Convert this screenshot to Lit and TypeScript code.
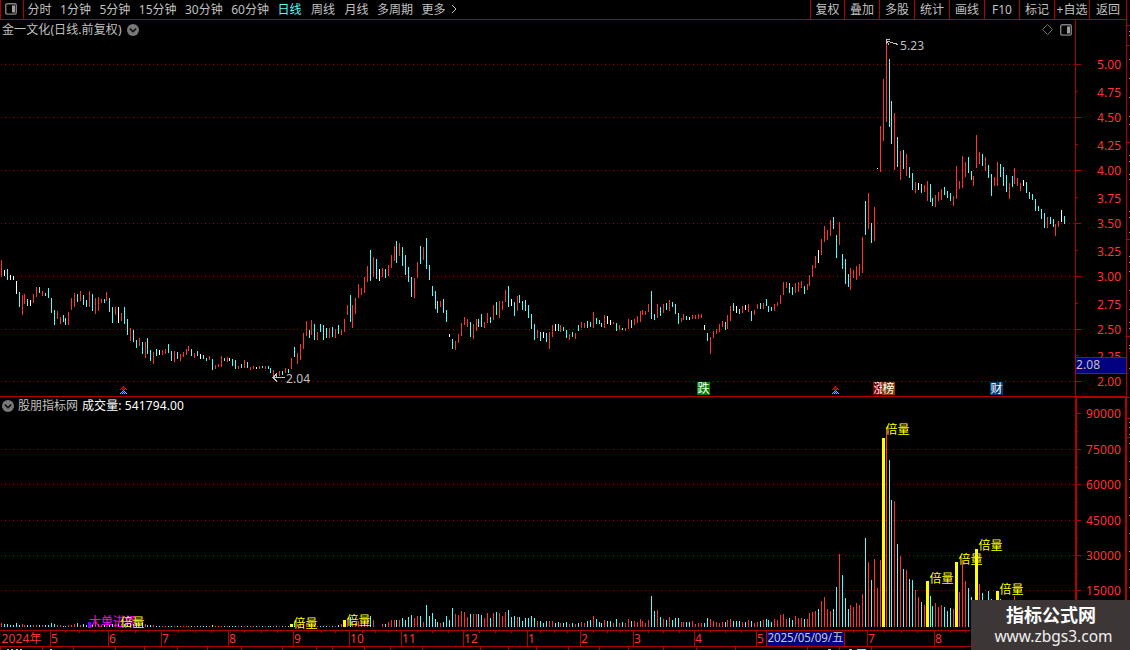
import { LitElement, html, svg, css } from 'lit';
import { customElement, property } from 'lit/decorators.js';

// one token per trading day: colour (r up, c down, w flat), high y, low y
const CANDLES = `
r260-277 w270-276 c269-280 w275-280 w276-280 w281-294 c292-307 r295-315 r294-304 c299-306 w300-306 r294-303 r287-297 c287-293
r291-296 c293-296 c288-298 c298-313 c310-325 r311-319 r317-324 c315-322 c318-325 r312-325 r298-310 r293-307 c294-302 r291-301
c295-305 c300-307 r291-307 c294-311 r298-314 r297-311 r299-303 c299-303 r292-301 c298-312 c307-323 r307-315 w307-323 r313-321
c307-324 c319-335 r328-341 c330-342 c340-348 r338-346 c342-354 r342-358 c338-354 c350-361 r352-364 c349-356 w350-355 r350-355
r349-354 c344-353 c351-361 r351-362 c352-359 r354-361 r352-357 r349-355 r346-351 c349-356 r353-358 c351-356 w354-359 c355-359
c358-361 r356-360 c359-370 r365-369 r364-367 r356-367 c358-361 r357-362 w358-361 c359-366 c360-369 r366-369 c364-368 r360-368
c362-368 r367-370 r366-369 w367-369 r366-369 c366-368 r366-369 c366-369 c368-373 r370-378 c373-377 r371-376 c371-375 r368-373
c369-373 r358-369 c347-357 r353-364 r344-360 r333-349 r321-336 c330-338 r320-335 c324-340 r332-340 c324-332 c325-340 c328-338
r328-338 c327-337 r329-338 c325-334 r330-335 r319-332 r305-315 c295-322 r305-328 r298-314 r284-298 r288-295 r277-293 r266-282
c250-281 r257-277 c259-279 w269-281 r268-277 c269-278 r265-276 r255-268 r246-261 c241-263 r243-256 c247-266 c255-275 c267-282
c277-297 r278-298 r262-278 c246-264 r247-260 c238-269 c265-280 c286-296 c291-309 c301-313 r301-307 c299-313 c310-322 w334-337
c339-349 r341-350 r334-343 r323-336 r317-325 r319-327 c322-337 r324-339 r319-331 c319-327 c314-327 r322-328 r313-323 c317-323
r305-320 c302-315 r301-318 r301-310 r290-302 c286-307 w299-306 c302-316 r296-311 c295-303 c301-310 c300-311 c305-318 c314-329
c324-340 r330-338 c332-341 w332-338 c333-342 r332-349 r325-337 w324-331 c324-331 r325-332 c327-331 c330-338 r334-340 c332-337
r333-339 c325-331 r322-328 r323-328 c321-328 c322-327 r312-328 c318-324 c320-324 c323-327 r315-328 w316-324 w320-325 r322-324
c323-331 r325-330 c328-330 r328-331 r319-329 c320-328 r319-325 r316-323 r311-322 r310-315 r311-315 r304-312 c291-319 c314-320
r304-318 c307-316 r304-313 c303-310 r300-311 c302-307 c304-314 c313-324 r318-322 r314-320 c316-320 w317-320 r315-319 r315-319
r314-319 r314-318 w325-330 c333-341 r337-354 r331-338 r329-334 r324-332 r321-327 c322-330 r315-329 r306-321 c303-311 w306-313
c309-314 r306-313 w305-310 r304-312 c311-321 r310-315 r304-309 c303-309 r303-309 c299-306 c306-312 c307-311 r304-311 r302-306
r295-304 r282-295 r282-288 c283-293 c287-295 r283-293 r282-292 r281-288 c286-294 r284-290 r275-286 r265-277 r256-268 w250-263
r239-255 r226-242 r230-240 r220-236 c217-229 c235-258 r222-245 c254-269 c259-284 c274-287 r268-290 r270-278 r266-280 r264-276
r237-273 c201-235 r193-229 c223-243 r207-241 w168-169 r126-172 r79-141 r43-122 c59-127 c101-144 r113-170 c137-167 r151-180
c150-169 r154-176 c167-178 c173-190 r182-193 w183-190 c184-193 r185-192 r181-201 c184-202 c198-206 r195-207 r192-201 r189-200
c187-195 c191-198 c193-201 r196-206 r166-199 r181-189 r156-188 r162-177 c157-173 c171-180 r176-186 r135-168 r152-164 c154-166
r157-171 c165-178 c174-196 r177-186 r162-186 c164-177 c167-186 c175-192 r183-199 c176-187 r168-184 r178-186 r183-191 w180-186
c182-193 c192-199 c194-200 c199-211 c206-211 c209-219 c213-228 r217-228 c217-224 c219-227 r224-236 r221-227 w210-222 c216-224
`.trim().split(/\s+/);

// x of the n-th day, just under three pixels apart
const dayX = (n: number) => 1 + 3 * n - Math.floor((n + 7.04) / 14.115);

// volume bar heights keyed by the x they start from
const VOLUME_RUNS: [number, string][] = [
  [1, '4 3 3 2 2 4 2 3 2 2 2 2 2 2 2 2 2 4 3 2 2 1 1 2 2 3 4 2 3 2 2 3 5 3 2 2 1 2 3 3 4 3 3 3 4 3 4 3 4 3 2 2 2 1 1 1 1 1 1 1 1 1 1 1 1 1 1 1 1 1 1 1 2 1 1 1 1 1 1 1 1 1 1 1 1 1 1 1 1 1 1 1 1 1 1 1 1 1 1 3 4 3 4 5 4 3 3 2 1 1 1 1 1 1 1 2 3 7 7 10 6 4 6 5 6 8 11 7 6 3'],
  [382, '3 3 5 7 7 7 7 9 7 10 12 9 11 11 5 22 11 14 8 5 4 5 11 7 19 13 12 16 15 10 13 13 13 13 12 9 14 9 14 15 14 11 15 17 10 11 10 10 6 9 9 11 9 6 6 4 6 6 6 4 5 4 4 5 3 4 3 4 5 4 6 7 11 8 5 4 7 6 6 4 8 4 5 4 8 6 6 5 8 6 4 7 31 16 17 10 8 7 10 7 9 9 5 5 5 5 6 3 4 4 4 9 8 6 5 4 5 5 7 8 6 6 6 5 5 7 6 4 5 6 7 8 7'],
  [771, '5 8 7 12 13 8 9 7 11 9 9 8 8 14 15 16 18 26 30 18 16 18 40 73 52 29 18 22 20 24 22 33 89 65 47 68 39 67 189 199 167 127 126 83 71 58 57 48 47 37 30 25 22 46 31 21 24 20 22 20 16 19 18 65 35 67 46 39 30 26 78 43 34 26 36 28 22 36 28 26 22 24 20 31 18 16 15 14 13 12 11 12 10 9 9 8 8 7 8 7 6'],
];

const DOUBLED = [290, 343, 883, 927, 956, 976, 997];

const COLOR: Record<string, string> = { r: '#ff3232', c: '#54fcfc', w: '#ffffff' };

const VOLUME_TAGS = [[120.5, 622], [293.5, 623], [346.5, 620], [885.5, 429], [929.5, 578], [958.5, 559], [978.5, 545], [999.5, 589]];

const PRICE_LABELS: [string, number][] = [
  ['5.00', 64], ['4.75', 92], ['4.50', 117], ['4.25', 145], ['4.00', 170], ['3.75', 198], ['3.50', 223],
  ['3.25', 251], ['3.00', 276], ['2.75', 304], ['2.50', 329], ['2.25', 356], ['2.00', 381],
];

const MONTHS: [string, number][] = [
  ['5', 50], ['6', 108], ['7', 161], ['8', 228], ['9', 293], ['10', 349], ['11', 401], ['12', 463],
  ['1', 527], ['2', 580], ['3', 633], ['4', 694], ['5', 756], ['7', 867], ['8', 934],
];

const WEEK_TICKS = [65, 79, 94, 121, 135, 148, 178, 195, 211, 244, 261, 277, 308, 321, 335, 362, 375, 388, 417, 432, 448,
  479, 495, 511, 540, 554, 567, 593, 607, 620, 648, 663, 679, 710, 725, 741, 853, 884, 901, 917, 950, 965];

const LOWER_TICKS = [0, 42, 73, 115, 144, 177, 207, 241, 282, 316, 332, 364, 390, 422, 480, 508, 536, 568, 599, 628, 663,
  696, 735, 807, 839, 871];

const px = (x: number, y: number, w: number, h: number, fill: string) =>
  svg`<rect x=${x} y=${y} width=${w} height=${h} fill=${fill}></rect>`;

const gridLine = (y: number) =>
  svg`<line class="grid" x1="1" x2="1075" y1=${y + 0.5} y2=${y + 0.5}></line>`;

const panelIcon = html`
  <svg class="icon" width="13" height="12" viewBox="0 0 13 12">
    <rect x="0.7" y="0.7" width="10.6" height="10.4" rx="1.5" fill="none" stroke="#808080" stroke-width="1.4"></rect>
    <rect x="7" y="2.5" width="3" height="7" fill="#a0a0a0"></rect>
  </svg>`;

const foldIcon = html`
  <svg class="icon" width="12" height="12" viewBox="0 0 12 12">
    <circle cx="6" cy="6" r="6" fill="#787878"></circle>
    <path d="M2.8 4.6L6 7.6L9.2 4.6" fill="none" stroke="#101010" stroke-width="1.5"></path>
  </svg>`;

const shared = css`
  :host {
    display: block;
    font: 12px/14px "Noto Sans", "Noto Sans CJK SC", sans-serif;
  }
  svg {
    display: block;
    shape-rendering: crispEdges;
  }
  .icon {
    shape-rendering: auto;
    flex: none;
  }
  .grid {
    stroke: #a80000;
    stroke-dasharray: 1 3;
  }
  text {
    font-size: 12px;
    white-space: pre;
  }
  .axis {
    fill: #ff3232;
    letter-spacing: 0.14px;
  }
  .title {
    position: absolute;
    display: flex;
    align-items: center;
    color: #c0c0c0;
    white-space: nowrap;
  }
`;

@customElement('period-bar')
export class PeriodBar extends LitElement {
  static styles = [shared, css`
    .bar {
      display: flex;
      height: 19px;
      border-bottom: 1px solid #b00000;
      color: #c0c0c0;
      line-height: 20px;
      white-space: nowrap;
    }
    .toggle {
      box-sizing: border-box;
      width: 24px;
      padding: 3px 0 0 4px;
      border: solid #b00000;
      border-width: 0 1px;
    }
    .periods {
      display: flex;
      flex: 1;
      gap: 8.5px;
      padding-left: 3.5px;
    }
    .active {
      color: #54fcfc;
    }
    .wide {
      margin-right: 1px;
    }
    .more {
      display: flex;
      gap: 5px;
    }
    .more svg {
      margin-top: 4px;
    }
    .tools {
      display: flex;
      width: 316px;
    }
    .tool {
      box-sizing: border-box;
      width: 35px;
      border-left: 1px solid #b00000;
      text-align: center;
    }
    .tool:first-child {
      width: 34px;
    }
    .tool:last-child {
      width: 37px;
    }
  `];

  @property({ type: String }) active = '日线';

  periods = ['分时', '1分钟', '5分钟', '15分钟', '30分钟', '60分钟', '日线', '周线', '月线', '多周期'];
  tools = ['复权', '叠加', '多股', '统计', '画线', 'F10', '标记', '+自选', '返回'];

  render() {
    return html`
      <div class="bar">
        <div class="toggle">${panelIcon}</div>
        <div class="periods">
          ${this.periods.map((p) => html`
            <span class="${p === this.active ? 'active wide' : p === '周线' ? 'wide' : ''}">${p}</span>`)}
          <span class="more">更多
            <svg class="icon" width="7" height="10" viewBox="0 0 7 10">
              <path d="M1 1L5 5L1 9" fill="none" stroke="#c0c0c0"></path>
            </svg>
          </span>
        </div>
        <div class="tools">${this.tools.map((t) => html`<div class="tool">${t}</div>`)}</div>
      </div>
    `;
  }
}

@customElement('price-pane')
export class PricePane extends LitElement {
  static styles = [shared, css`
    :host {
      position: relative;
    }
    .title {
      left: 2px;
      top: 3px;
      gap: 5px;
      letter-spacing: 0.1px;
    }
    .corner {
      position: absolute;
      left: 1042px;
      top: 4px;
      display: flex;
      gap: 7px;
    }
    .note {
      fill: #c0c0c0;
      letter-spacing: 0.14px;
    }
    .badge {
      fill: #fff;
    }
  `];

  // two stacked triangles made of single pixels
  arrowMark(x: number) {
    return [0, 1, 2, 3].map((row) => Array.from({ length: row * 2 + 1 }, (_, i) => svg`
      ${px(x + 3 - row + i, 386 + row, 1, 1, i % 2 ? '#600000' : '#e01010')}
      ${px(x + 3 - row + i, 390 + row, 1, 1, i % 2 ? '#0000e0' : '#54c8fc')}
    `));
  }

  badge(x: number, label: string, color: string) {
    return svg`
      ${px(x, 382, 13, 13, color)}
      <text class="badge" x=${x + 0.5} y="393">${label}</text>
    `;
  }

  render() {
    return html`
      <svg width="1126" height="376" viewBox="0 20 1126 376">
        ${[64, 117, 170, 223, 276, 329, 381].map((y) => svg`${gridLine(y)}${px(1076, y, 5, 1, '#b00000')}`)}
        ${[91, 144, 197, 250, 303, 355].map((y) => px(1076, y, 2, 1, '#b00000'))}
        ${CANDLES.map((day, n) => {
          const [top, bottom] = day.slice(1).split('-').map(Number);
          return px(dayX(n), top, 1, bottom - top, COLOR[day[0]]);
        })}
        ${px(1075, 20, 1, 376, '#b00000')}
        ${PRICE_LABELS.map(([label, y]) => svg`<text class="axis" x="1097" y=${y + 5}>${label}</text>`)}
        ${px(1076, 357, 50, 17, '#b00000')}
        ${px(1076, 358, 50, 15, '#000080')}
        <text class="note" x="1076" y="369">2.08</text>
        <path d="M890 39.5H886.5V43.5M886.5 40.5L889 44.5M887 41L898 44.5" fill="none" stroke="#c0c0c0"></path>
        <text class="note" x="900" y="50">5.23</text>
        <path d="M285 377.5H273M277 373.5L273 377.5L277 381.5" fill="none" stroke="#c0c0c0"></path>
        <text class="note" x="286" y="383">2.04</text>
        ${this.arrowMark(120)}
        ${this.arrowMark(832)}
        ${this.badge(697, '跌', '#008000')}
        ${this.badge(873, '涨', '#800000')}
        ${this.badge(882, '榜', '#804000')}
        ${this.badge(990, '财', '#003c70')}
      </svg>
      <div class="title"><span>金一文化(日线.前复权)</span>${foldIcon}</div>
      <div class="corner">
        <svg class="icon" width="11" height="11" viewBox="0 0 11 11">
          <path d="M5.5 0.5L10.5 5.5L5.5 10.5L0.5 5.5Z" fill="none" stroke="#808080" stroke-width="0.9"></path>
        </svg>
        ${panelIcon}
      </div>
    `;
  }
}

@customElement('volume-pane')
export class VolumePane extends LitElement {
  static styles = [shared, css`
    :host {
      position: relative;
      border-top: 1px solid #b00000;
    }
    .title {
      left: 2px;
      top: 1.5px;
      gap: 4px;
    }
    .value {
      color: #fff;
      letter-spacing: 0.1px;
    }
    .tag {
      fill: #ffff00;
    }
    .inflow {
      fill: #ff00ff;
    }
  `];

  bars() {
    const days = CANDLES.map((day, n) => ({ x: dayX(n), up: day[0] === 'r' || dayX(n) === 877 || dayX(n) === 918 }));
    return VOLUME_RUNS.map(([from, heights]) => {
      const first = days.findIndex((d) => d.x === from);
      return heights.split(' ').map((h, n) => {
        const day = days[first + n];
        if (!day || (first + n > 127 && from === 1)) return null;
        if (DOUBLED.includes(day.x)) return null;
        return px(day.x, 627 - Number(h), 1, Number(h), day.up ? COLOR.r : COLOR.c);
      });
    });
  }

  render() {
    const doubled = [[290, 3], [343, 7], [882, 189], [926, 46], [955, 65], [975, 78], [996, 36]];
    return html`
      <svg width="1127" height="233" viewBox="0 397 1127 233">
        ${[449, 484, 520, 555, 590].map(gridLine)}
        ${this.bars()}
        ${doubled.map(([x, h]) => px(x, 627 - h, 3, h, '#ffff00'))}
        ${px(88, 622, 3, 6, '#8000ff')}
        <text class="inflow" x="89" y="626">大单进场</text>
        ${VOLUME_TAGS.map(([x, y]) => svg`<text class="tag" x=${x} y=${y + 4.5}>倍量</text>`)}
        ${px(1075, 397, 2, 233, '#b00000')}
        ${px(1125, 397, 1, 233, '#b00000')}
        ${px(1076, 397, 50, 1, '#b00000')}
        ${[413, 449, 484, 520, 555, 590].map((y, n) => svg`
          ${px(1077, y, 4, 1, '#b00000')}
          ${px(1077, y + 18, 1, 1, '#b00000')}
          <text class="axis" x="1086" y=${y + 5}>${90000 - n * 15000}</text>
        `)}
      </svg>
      <div class="title">${foldIcon}<span>股朋指标网</span><span class="value">成交量: 541794.00</span></div>
    `;
  }
}

@customElement('time-axis')
export class TimeAxis extends LitElement {
  static styles = [shared, css`
    .date {
      fill: #c8c8c8;
      letter-spacing: -0.1px;
    }
  `];

  render() {
    return html`
      <svg width="1126" height="20" viewBox="0 630 1126 20">
        ${px(0, 630, 1126, 1, '#b00000')}
        ${px(0, 646, 1126, 1, '#b00000')}
        ${WEEK_TICKS.map((x) => px(x, 631, 1, 2, '#b00000'))}
        ${LOWER_TICKS.map((x) => px(x, 647, 1, 3, '#b00000'))}
        <text class="axis" x="1.5" y="643">2024年</text>
        ${MONTHS.map(([label, x]) => svg`
          ${px(x, 631, 1, 15, '#b00000')}
          <text class="axis" x=${x + 1} y="643">${label}</text>
        `)}
        ${px(766, 631, 79, 15, '#b00000')}
        ${px(767, 631, 77, 15, '#000080')}
        <text class="date" x="767.5" y="642" textLength="76" lengthAdjust="spacingAndGlyphs">2025/05/09/五</text>
        ${[7, 11, 16, 20, 50].map((x) => px(x, 649, 2, 1, '#c0c0c0'))}
        ${[828, 849].map((x) => px(x, 649, 3, 1, '#c0c0c0'))}
        ${px(857, 649, 9, 1, '#54fcfc')}
      </svg>
    `;
  }
}

@customElement('app-root')
export class AppRoot extends LitElement {
  static styles = css`
    :host {
      display: block;
      position: relative;
      width: 1130px;
      height: 650px;
      overflow: hidden;
      background: #000;
    }
    .screen {
      display: flex;
      height: 650px;
    }
    .main {
      width: 1126px;
    }
    .edge {
      display: block;
      shape-rendering: crispEdges;
    }
    .watermark {
      position: absolute;
      right: 0;
      bottom: 0;
      box-sizing: border-box;
      width: 159px;
      height: 50px;
      padding: 4px 0 0 1px;
      background: #3c3736;
      color: #fff;
      text-align: center;
      font-family: "Noto Sans", "Noto Sans CJK SC", sans-serif;
    }
    .site {
      font-size: 18px;
      line-height: 22px;
      font-weight: bold;
    }
    .url {
      padding-left: 5px;
      font-size: 15.5px;
      line-height: 20px;
      color: #f0f0f0;
    }
  `;

  render() {
    return html`
      <div class="screen">
        <div class="main">
          <period-bar></period-bar>
          <price-pane></price-pane>
          <volume-pane></volume-pane>
          <time-axis></time-axis>
        </div>
        <svg class="edge" width="4" height="650" viewBox="1126 0 4 650">
          ${px(1126, 0, 1, 650, '#b00000')}
          ${[25, 45, 142, 239, 336, 397, 418, 437].map((y) => px(1127, y, 3, 1, '#b00000'))}
          ${[31, 35, 59, 78, 97, 116, 124, 155, 161, 174, 179, 211, 217, 232, 256, 262, 271, 290, 309, 322, 328, 345, 348,
            368, 422, 427, 434, 443, 461, 479, 497, 515, 533, 551, 569, 587].map((y) => px(1129, y, 1, 1, '#a0a0a0'))}
        </svg>
      </div>
      <div class="watermark">
        <div class="site">指标公式网</div>
        <div class="url">www.zbgs3.com</div>
      </div>
    `;
  }
}
